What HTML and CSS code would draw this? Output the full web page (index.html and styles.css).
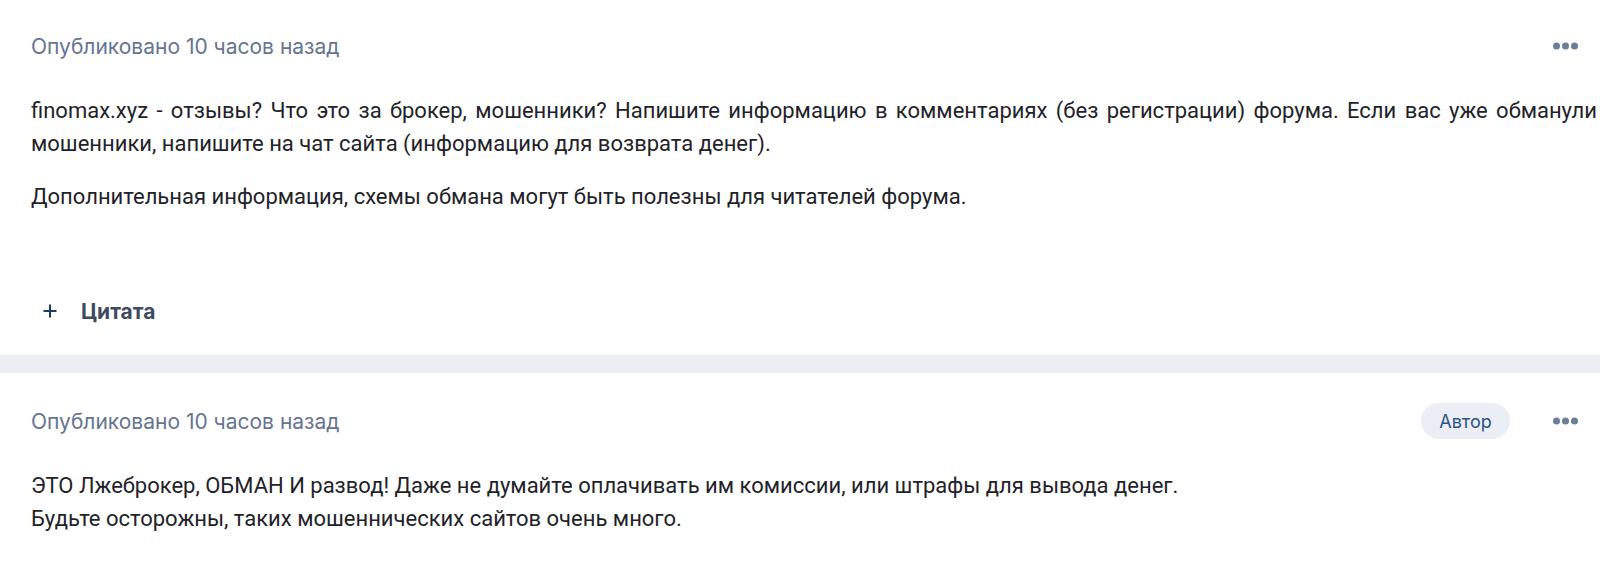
FILE: index.html
```html
<!DOCTYPE html>
<html lang="ru">
<head>
<meta charset="utf-8">
<title>finomax.xyz - отзывы</title>
<link rel="stylesheet" href="styles.css">
</head>
<body>
<article class="post post-first">
  <header class="post-head">
    <span class="meta">Опубликовано 10 часов назад</span>
    <div class="actions">
      <button class="more" aria-label="Ещё">
        <svg width="26" height="8" viewBox="0 0 26 8"><circle cx="3.5" cy="4" r="3.5"/><circle cx="12.5" cy="4" r="3.5"/><circle cx="21.5" cy="4" r="3.5"/></svg>
      </button>
    </div>
  </header>
  <div class="content">
    <p class="justify">finomax.xyz - отзывы? Что это за брокер, мошенники? Напишите информацию в комментариях (без регистрации) форума. Если вас уже обманули мошенники, напишите на чат сайта (информацию для возврата денег).</p>
    <p>Дополнительная информация, схемы обмана могут быть полезны для читателей форума.</p>
  </div>
  <footer class="post-foot">
    <button class="quote">
      <svg width="16" height="16" viewBox="0 0 16 16"><path d="M8 1.5v13M1.5 8h13" stroke="currentColor" stroke-width="2" fill="none"/></svg>
      <span>Цитата</span>
    </button>
  </footer>
</article>
<div class="sep"></div>
<article class="post">
  <header class="post-head">
    <span class="meta">Опубликовано 10 часов назад</span>
    <div class="actions">
      <span class="badge">Автор</span>
      <button class="more" aria-label="Ещё">
        <svg width="26" height="8" viewBox="0 0 26 8"><circle cx="3.5" cy="4" r="3.5"/><circle cx="12.5" cy="4" r="3.5"/><circle cx="21.5" cy="4" r="3.5"/></svg>
      </button>
    </div>
  </header>
  <div class="content">
    <p>ЭТО Лжеброкер, ОБМАН И развод! Даже не думайте оплачивать им комиссии, или штрафы для вывода денег.<br>Будьте осторожны, таких мошеннических сайтов очень много.</p>
  </div>
</article>
</body>
</html>
```

FILE: styles.css
```css
* { box-sizing: border-box; }
html, body { margin: 0; padding: 0; background: #fff; }
body { font-family: Inter, "Noto Sans", sans-serif; overflow: hidden; }

.post { padding: 30px 3px 0 31px; }
.post-first { padding-top: 28px; }

.post-head {
  display: flex;
  align-items: center;
  justify-content: space-between;
  height: 36px;
  padding-right: 18px;
}
.meta { font-size: 21px; color: #65758f; }
.actions { display: flex; align-items: center; gap: 43px; }
.more {
  border: 0; background: none; padding: 0; margin: 0;
  display: flex; align-items: center; cursor: pointer;
}
.more svg { display: block; fill: #6b7d98; }
.badge {
  display: inline-flex; align-items: center; justify-content: center;
  height: 36px; width: 89px;
  border-radius: 18px;
  background: #ebeef4;
  color: #2c5386;
  font-size: 18px;
}

.content { margin-top: 30px; font-family: Roboto, "Liberation Sans", sans-serif; font-size: 22px; line-height: 33px; color: #1f2329; }
.content p { margin: 0 0 20px; }
.content p:last-child { margin-bottom: 0; }
.content .justify { text-align: justify; }

.post-foot { margin-top: 78px; padding-bottom: 24px; }
.quote {
  display: flex; align-items: center; gap: 23px;
  height: 40px; border: 0; background: none; padding: 0 0 0 11px; margin: 0;
  font-family: Inter, "Noto Sans", sans-serif; font-weight: 700; font-size: 21px; color: #3d4a5f;
}
.quote svg { color: #1c3b68; display: block; }

.sep { height: 18px; background: #ebeef2; }
```
